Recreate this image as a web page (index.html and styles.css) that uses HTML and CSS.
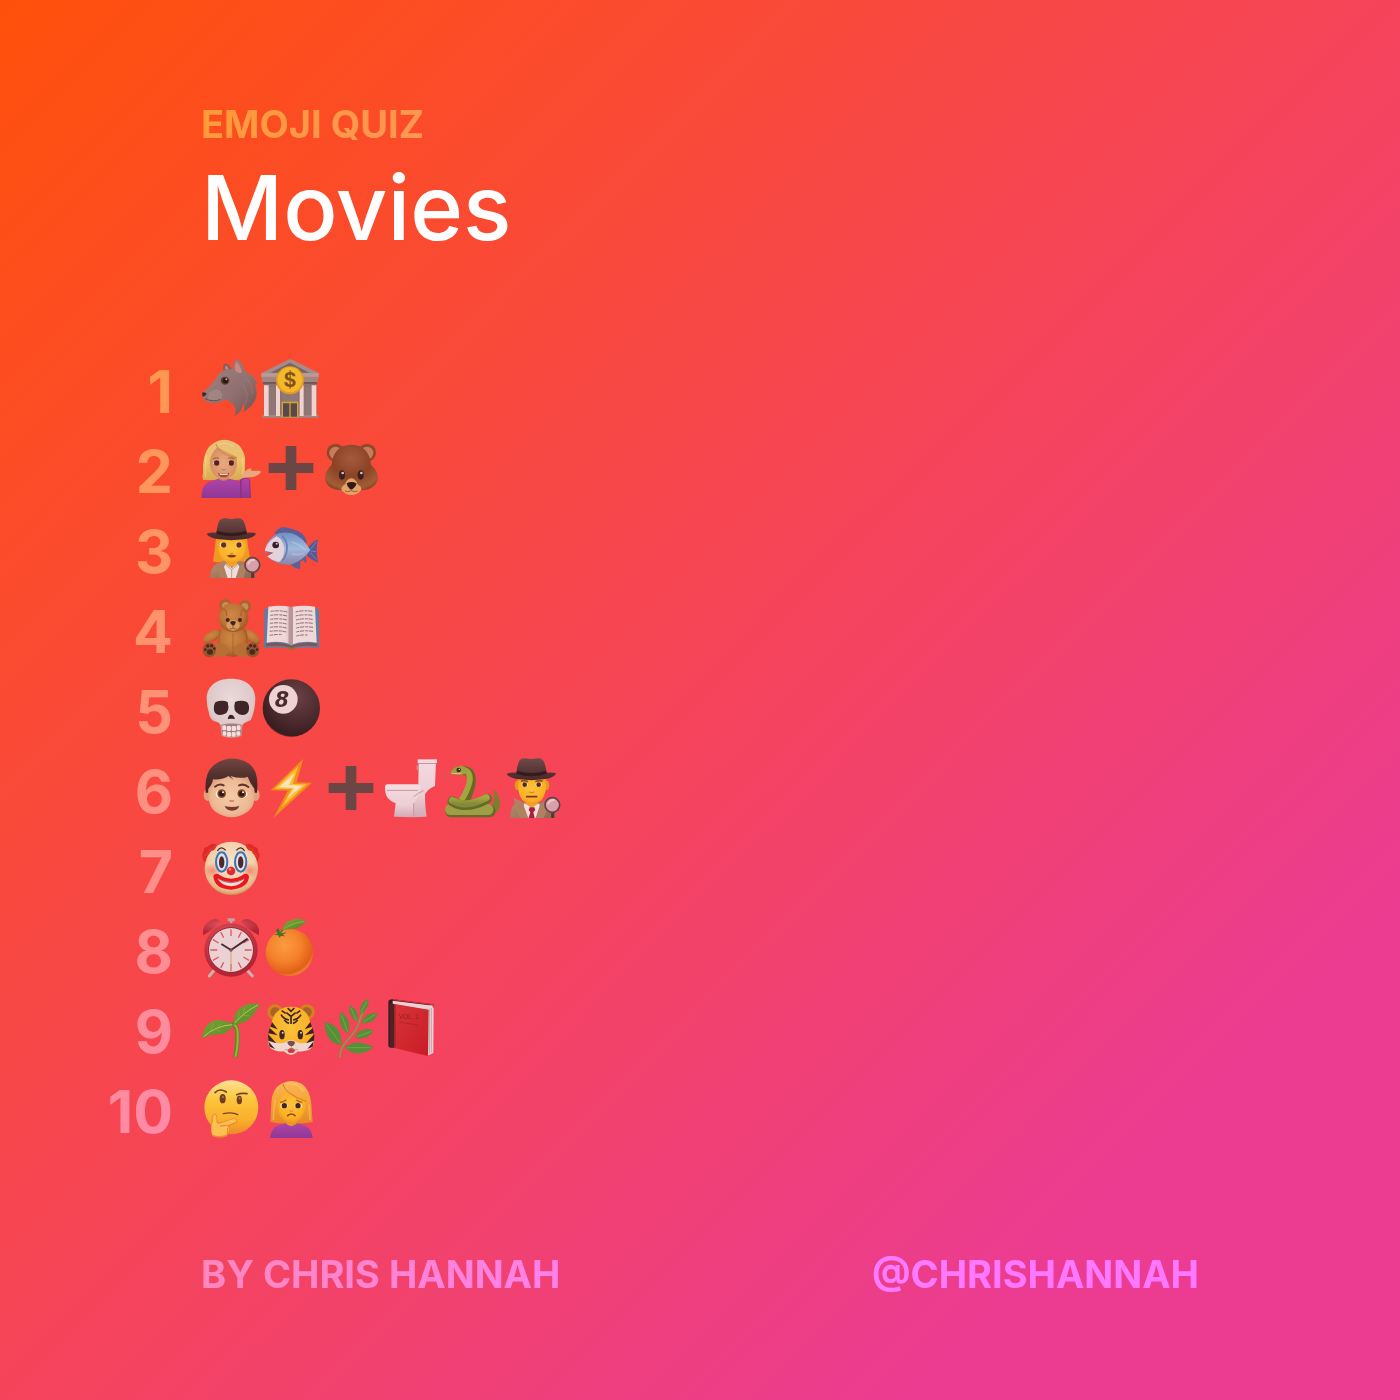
FILE: index.html
```html
<!DOCTYPE html>
<html lang="en">
<head>
<meta charset="utf-8">
<meta name="viewport" content="width=device-width, initial-scale=1">
<title>Emoji Quiz: Movies</title>
<link rel="stylesheet" href="styles.css">
</head>
<body>
<svg class="defs" aria-hidden="true">
  <defs>
    <linearGradient id="wolf" x1="0" y1="0" x2="1" y2="1"><stop offset="0" stop-color="#a08482"/><stop offset=".6" stop-color="#8f7070"/><stop offset="1" stop-color="#70504e"/></linearGradient>
    <linearGradient id="blonde" x1="0" y1="0" x2="0" y2="1"><stop offset="0" stop-color="#e9bd78"/><stop offset=".5" stop-color="#ecc56a"/><stop offset="1" stop-color="#d9a94f"/></linearGradient>
    <linearGradient id="purple" x1="0" y1="0" x2="0" y2="1"><stop offset="0" stop-color="#b044a6"/><stop offset="1" stop-color="#8f3796"/></linearGradient>
    <radialGradient id="tan" cx=".5" cy=".5" r=".6"><stop offset="0" stop-color="#e9ab82"/><stop offset="1" stop-color="#d68a5c"/></radialGradient>
    <radialGradient id="bear" cx=".5" cy=".3" r=".75"><stop offset="0" stop-color="#a65a3c"/><stop offset=".5" stop-color="#8b4325"/><stop offset=".85" stop-color="#a35d35"/><stop offset="1" stop-color="#7d3c20"/></radialGradient>
    <linearGradient id="hat" x1="0" y1="0" x2="0" y2="1"><stop offset="0" stop-color="#6e4a47"/><stop offset="1" stop-color="#48282a"/></linearGradient>
    <radialGradient id="yellow" cx=".5" cy=".4" r=".65"><stop offset="0" stop-color="#fcc23c"/><stop offset=".7" stop-color="#fbb023"/><stop offset="1" stop-color="#ee8f22"/></radialGradient>
    <linearGradient id="coat" x1="0" y1="0" x2="1" y2="1"><stop offset="0" stop-color="#b98f70"/><stop offset="1" stop-color="#8d674f"/></linearGradient>
    <linearGradient id="fish" x1="0" y1="0" x2="0" y2="1"><stop offset="0" stop-color="#6f8fc4"/><stop offset=".5" stop-color="#a0b9dc"/><stop offset="1" stop-color="#8a83a8"/></linearGradient>
    <radialGradient id="teddy" cx=".45" cy=".4" r=".65"><stop offset="0" stop-color="#cf8844"/><stop offset=".6" stop-color="#bd7435"/><stop offset="1" stop-color="#985020"/></radialGradient>
    <linearGradient id="page" x1="0" y1="0" x2="1" y2="0"><stop offset="0" stop-color="#f3dada"/><stop offset=".8" stop-color="#f0d5d5"/><stop offset="1" stop-color="#c9a5a5"/></linearGradient>
    <radialGradient id="bone" cx=".5" cy=".35" r=".65"><stop offset="0" stop-color="#eadada"/><stop offset=".7" stop-color="#dec8c8"/><stop offset="1" stop-color="#c6a4a4"/></radialGradient>
    <radialGradient id="ball" cx=".6" cy=".3" r=".75"><stop offset="0" stop-color="#6a4044"/><stop offset=".6" stop-color="#4a2a2d"/><stop offset=".92" stop-color="#391c1f"/><stop offset="1" stop-color="#664044"/></radialGradient>
    <radialGradient id="fair" cx=".5" cy=".5" r=".6"><stop offset="0" stop-color="#f4caa8"/><stop offset=".7" stop-color="#edb994"/><stop offset="1" stop-color="#dc9271"/></radialGradient>
    <linearGradient id="boyhair" x1="0" y1="0" x2="0" y2="1"><stop offset="0" stop-color="#734641"/><stop offset=".5" stop-color="#52302e"/><stop offset="1" stop-color="#402020"/></linearGradient>
    <linearGradient id="china" x1="0" y1="0" x2="0" y2="1"><stop offset="0" stop-color="#f3d9dd"/><stop offset=".6" stop-color="#ecced4"/><stop offset="1" stop-color="#d3a9b2"/></linearGradient>
    <linearGradient id="snake" x1="0" y1="0" x2="0" y2="1"><stop offset="0" stop-color="#a5a644"/><stop offset="1" stop-color="#868a34"/></linearGradient>
    <radialGradient id="clown" cx=".5" cy=".4" r=".6"><stop offset="0" stop-color="#f8e2cc"/><stop offset=".7" stop-color="#f2cfaa"/><stop offset=".9" stop-color="#e8b384"/><stop offset="1" stop-color="#cd9256"/></radialGradient>
    <radialGradient id="cheek"><stop offset="0" stop-color="#fa6a50" stop-opacity=".7"/><stop offset="1" stop-color="#fa6a50" stop-opacity="0"/></radialGradient>
    <radialGradient id="redmetal" cx=".45" cy=".35" r=".6"><stop offset="0" stop-color="#e8616a"/><stop offset="1" stop-color="#b42434"/></radialGradient>
    <radialGradient id="orange" cx=".4" cy=".35" r=".7"><stop offset="0" stop-color="#fb9c42"/><stop offset=".5" stop-color="#f5812a"/><stop offset=".85" stop-color="#e16018"/><stop offset="1" stop-color="#f49245"/></radialGradient>
    <linearGradient id="leaf" x1="0" y1="0" x2="1" y2="1"><stop offset="0" stop-color="#84a838"/><stop offset="1" stop-color="#4f8626"/></linearGradient>
    <linearGradient id="redbook" x1="0" y1="0" x2="1" y2="1"><stop offset="0" stop-color="#d93438"/><stop offset="1" stop-color="#c81c26"/></linearGradient>
    <linearGradient id="think" x1="0" y1="0" x2="0" y2="1"><stop offset="0" stop-color="#fde092"/><stop offset=".35" stop-color="#fcc53c"/><stop offset=".75" stop-color="#faae2a"/><stop offset="1" stop-color="#ee8828"/></linearGradient>
    <linearGradient id="goldhair" x1="0" y1="0" x2="0" y2="1"><stop offset="0" stop-color="#fbb85c"/><stop offset=".5" stop-color="#f4a332"/><stop offset="1" stop-color="#e58a26"/></linearGradient>

    <symbol id="plus" viewBox="0 0 180 180"><path fill="#6b4644" d="M74 24h32v51h51v30h-51v51H74v-51H23V75h51z"/></symbol>
    <symbol id="hatlens" viewBox="0 0 180 180">
      <path fill="url(#hat)" d="M17 48Q24 43 46 44 49 20 55 8 60 0 74 1 91 5 108 1 122 0 127 8 134 20 137 44 160 43 165 47 158 60 128 64 91 69 54 64 24 60 17 48z"/>
      <path fill="#351b1d" d="M48 38Q91 52 136 38L137 48Q91 62 46 48z"/>
      <path stroke="#56373c" stroke-width="9" stroke-linecap="round" d="M155 160v18"/>
      <circle cx="154" cy="141" r="22" fill="#d9a0aa" stroke="#654148" stroke-width="5"/>
      <path d="M142 137q5-12 17-11" fill="none" stroke="#ecc6cb" stroke-width="6" stroke-linecap="round"/>
    </symbol>
  </defs>
</svg>

<main class="quiz">
  <header class="masthead">
    <p class="label">EMOJI QUIZ</p>
    <h1 class="title">Movies</h1>
  </header>

  <ol class="clues">
    <li class="clue"><span class="number">1</span><span class="emojis">
      <svg class="emoji" viewBox="0 0 180 180" role="img" aria-label="Wolf">
        <path fill="#7d5f5d" d="M68 40Q64 22 72 16 86 20 92 34L86 46z"/>
        <path fill="#c98582" d="M73 35q-2-9 1-13 7 4 10 12z"/>
        <path fill="url(#wolf)" d="M4 105Q28 84 42 66 56 40 76 34L96 34Q97 12 105 2 126 12 131 38 148 52 165 54L154 57Q166 66 170 78L161 76Q168 96 167 112 160 144 127 162 134 144 127 136 124 162 100 174 108 156 99 144 92 130 72 124 54 138 36 136 10 132 9 122 2 116 4 105z"/>
        <path fill="#c98884" d="M103 38Q99 20 107 11 119 22 123 44 113 48 103 38z"/>
        <path fill="#a98c89" d="M24 104Q42 88 58 98 72 116 54 128 34 134 20 126z" opacity=".65"/>
        <ellipse cx="72" cy="68" rx="13" ry="12" fill="#5f3c32"/><circle cx="73" cy="68" r="8" fill="#28181a"/><circle cx="76" cy="64" r="3" fill="#c9aba8"/>
        <path fill="#3f282b" d="M3 104q10-3 14 4-5 8-12 8z"/><path d="M12 122q28 12 46 2" fill="none" stroke="#69484a" stroke-width="3"/>
        <path d="M134 60q22 16 20 46M126 82q22 30 6 56" fill="none" stroke="#a88b88" stroke-width="3" opacity=".4"/>
      </svg>
      <svg class="emoji" viewBox="0 0 180 180" role="img" aria-label="Bank">
        <path fill="#8b7270" d="M8 70h158v106H8z"/><path fill="#9f8884" d="M4 170h168v9H4z"/>
        <path fill="#8f7775" d="M62 88h50v88H62zM22 88h22v80H22zM130 88h22v80h-22z"/>
        <path fill="#a58c89" d="M1 45L82 5q6-3 12 0l79 40v14H1z"/><path fill="#7b6361" d="M28 44l59-30 58 30z"/>
        <path fill="#b69c98" d="M1 46h172v10H1z"/><path fill="#6e5654" d="M6 72h162v5H6z"/><path fill="#a08583" d="M3 60h168v12H3z"/>
        <path fill="#f0d2d0" d="M9 82h14v92H9zM45 82h12v92H45zM116 82h12v92h-12zM152 82h14v92h-14z"/>
        <path fill="#d6a42c" d="M62 131h50v47H62z"/><path fill="#58494f" d="M66 136h19v40H66zM89 136h19v40H89z"/>
        <circle cx="87" cy="67" r="42" fill="#e89b20"/><circle cx="87" cy="65" r="37" fill="#f2ba2b"/>
        <text x="87" y="87" class="coin-mark">$</text>
      </svg>
    </span></li>

    <li class="clue"><span class="number">2</span><span class="emojis">
      <svg class="emoji" viewBox="0 0 180 180" role="img" aria-label="Woman tipping hand">
        <path fill="url(#blonde)" d="M40 14Q65-3 98 12 126 24 132 60L132 118Q110 132 67 126L8 126Q2 122 6 104 4 32 40 14z"/>
        <path fill="#cf8456" d="M52 108h32v26H52z"/>
        <path fill="url(#purple)" d="M2 180Q0 138 30 130L52 122Q67 134 84 122L118 130V180z"/>
        <path fill="url(#tan)" d="M26 66Q34 40 50 28 82 46 106 56 114 100 88 117 67 130 46 117 24 100 26 66z"/>
        <path d="M45 18Q50 48 108 60" fill="none" stroke="#c78d40" stroke-width="3"/>
        <path d="M50 20q26-12 48 6M16 50q-4 36-2 68M124 60q4 26 1 54" fill="none" stroke="#f4d694" stroke-width="5" opacity=".5"/>
        <path fill="#fff0e6" d="M36 76q10-12 20 0-10 9-20 0zM80 76q10-12 20 0-10 9-20 0z"/><circle cx="47" cy="75" r="8" fill="#502420"/><circle cx="91" cy="75" r="8" fill="#502420"/>
        <path d="M36 63q8-6 18-2M82 61q10-4 18 2" fill="none" stroke="#a86835" stroke-width="4"/>
        <path fill="#a04b3c" d="M51 104q17 5 34 0-2 14-17 14t-17-14z"/><path fill="#efd1c7" d="M55 106q13 3 26 0l-2 5H57z"/>
        <path d="M62 94q6 4 12 0" fill="none" stroke="#c07650" stroke-width="3"/>
        <path fill="#912e86" d="M117 126q14-14 30-2l3 56h-33z"/><path fill="url(#purple)" d="M122 126q11-8 22-2l3 56h-25z"/>
        <path fill="#eaa77b" d="M123 120L125 108Q140 90 152 92L149 98 171 98Q183 98 178 105 168 117 145 118z"/>
      </svg>
      <svg class="emoji" role="img" aria-label="Plus"><use href="#plus"/></svg>
      <svg class="emoji" viewBox="0 0 180 180" role="img" aria-label="Bear">
        <circle cx="44" cy="44" r="27" fill="#8f4828"/><circle cx="44" cy="45" r="19" fill="#c97c5c"/><circle cx="138" cy="44" r="27" fill="#8f4828"/><circle cx="138" cy="45" r="19" fill="#c97c5c"/>
        <path fill="url(#bear)" d="M91 20C130 20 147 46 150 80 163 92 172 106 171 120 168 148 138 159 112 156 99 162 84 162 71 156 44 160 13 148 12 120 12 106 20 92 32 80 35 46 52 20 91 20z"/>
        <path fill="#e2a366" d="M91 121Q104 122 110 139 124 147 120 157 110 171 91 171 73 171 62 157 58 147 72 139 78 122 91 121z"/>
        <path fill="#33191c" d="M77 136q14-8 29 0 2 6-12 18-4 2-8-2-9-9-9-16z"/><path d="M91 153v5q-12 6-19 1M91 158q12 6 19 1" fill="none" stroke="#a0643e" stroke-width="3"/>
        <ellipse cx="63" cy="111" rx="9" ry="14" fill="#39201f"/><ellipse cx="119" cy="111" rx="9" ry="14" fill="#39201f"/><circle cx="65" cy="105" r="4" fill="#d8bfc3"/><circle cx="121" cy="105" r="4" fill="#d8bfc3"/>
      </svg>
    </span></li>

    <li class="clue"><span class="number">3</span><span class="emojis">
      <svg class="emoji" viewBox="0 0 180 180" role="img" aria-label="Woman detective">
        <path fill="#ed9a24" d="M45 60Q40 108 36 130 50 136 66 130L120 130Q134 136 149 128 142 98 138 60z"/>
        <path fill="url(#coat)" d="M27 180Q28 146 48 138L70 128H116L138 140Q160 150 163 180z"/>
        <path fill="#eea02d" d="M76 122h32v24H76z"/>
        <path fill="url(#yellow)" d="M51 62H135Q138 104 122 122 92 150 63 122 48 104 51 62z"/>
        <path fill="#f1dddb" d="M74 138L92 150 110 138 120 152 110 180H76L65 152z"/><path d="M74 141l18 14 18-14M92 153v27" fill="none" stroke="#bd9ea0" stroke-width="3"/>
        <path fill="#ad8162" d="M46 136L67 140 80 180H58zM117 140L139 136 128 180H104z"/>
        <ellipse cx="67" cy="81" rx="10" ry="9" fill="#f9e4d2"/><ellipse cx="114" cy="81" rx="10" ry="9" fill="#f9e4d2"/><circle cx="68" cy="81" r="8" fill="#66301c"/><circle cx="114" cy="81" r="8" fill="#66301c"/>
        <path d="M87 105q5 4 10 0" fill="none" stroke="#dd8b20" stroke-width="4"/><path fill="#80342b" d="M77 113q14-5 30 0-14 11-30 0z"/>
        <use href="#hatlens"/>
      </svg>
      <svg class="emoji" viewBox="0 0 180 180" role="img" aria-label="Fish">
        <path fill="#5b5f96" d="M40 44Q54 30 64 27 96 30 120 44 134 54 138 76L60 62zM80 132Q96 150 117 153L118 130 127 126Q131 136 137 134L134 110z"/>
        <path fill="#535b95" d="M138 93Q152 72 171 64 163 94 171 134 150 126 134 108z"/><path d="M148 94l18-22M150 99l16 2M148 104l18 20" stroke="#7781b4" stroke-width="3"/>
        <path fill="url(#fish)" d="M12 95Q20 60 54 46 104 34 136 78L148 97Q124 130 90 140 46 142 17 113L28 106 13 103z"/>
        <path fill="#e3d1dc" d="M12 94Q24 66 47 55 66 62 70 92 69 124 54 132 32 127 17 113L29 107 13 102z"/>
        <path d="M63 53q20 20 14 48-4 20-14 27" fill="none" stroke="#6580b1" stroke-width="5"/>
        <path d="M13 101l19 4-15 8" fill="none" stroke="#ac5568" stroke-width="4"/>
        <circle cx="44" cy="81" r="10" fill="#331e29"/><circle cx="47" cy="77" r="3" fill="#d4c2ca"/><path d="M92 72q28 7 42 26M92 108q18 4 38-2" stroke="#c0d0e7" stroke-width="4" fill="none" opacity=".5"/>
      </svg>
    </span></li>

    <li class="clue"><span class="number">4</span><span class="emojis">
      <svg class="emoji" viewBox="0 0 180 180" role="img" aria-label="Teddy bear">
        <circle cx="73" cy="22" r="18" fill="#a96230"/><circle cx="74" cy="23" r="11" fill="#c88c54"/><circle cx="132" cy="25" r="18" fill="#a96230"/><circle cx="131" cy="26" r="11" fill="#c88c54"/>
        <ellipse cx="34" cy="114" rx="32" ry="15" transform="rotate(-30 34 114)" fill="url(#teddy)"/><ellipse cx="151" cy="116" rx="32" ry="15" transform="rotate(36 151 116)" fill="url(#teddy)"/>
        <path fill="url(#teddy)" d="M58 94Q96 78 134 94 150 140 134 166 97 186 58 166 42 138 58 94z"/>
        <path d="M96 105v70M58 96q-8 40 2 68M134 96q8 40 0 68" stroke="#9c592a" stroke-width="2" fill="none"/>
        <ellipse cx="97" cy="59" rx="45" ry="43" fill="url(#teddy)"/><path d="M58 40Q74 20 78 54M119 54Q122 20 136 44" fill="none" stroke="#8e4f26" stroke-width="2"/>
        <ellipse cx="96" cy="82" rx="20" ry="16" fill="#d89c5d"/><path fill="#41251f" d="M87 72q9-6 18 0-3 10-9 11-7-2-9-11z"/><path d="M96 82v8q-6 5-11 2M96 90q6 5 11 2" fill="none" stroke="#724126" stroke-width="2"/>
        <circle cx="80" cy="66" r="6" fill="#40221f"/><circle cx="117" cy="66" r="6" fill="#40221f"/>
        <ellipse cx="53" cy="156" rx="31" ry="21" fill="#b86f35"/><ellipse cx="128" cy="156" rx="31" ry="21" fill="#b86f35"/><ellipse cx="25" cy="156" rx="20" ry="22" fill="#94552e"/><ellipse cx="155" cy="156" rx="20" ry="22" fill="#94552e"/>
        <g fill="#492922"><ellipse cx="27" cy="162" rx="9" ry="8"/><circle cx="13" cy="155" r="4"/><circle cx="20" cy="144" r="5"/><circle cx="32" cy="143" r="5"/><circle cx="40" cy="152" r="4"/><ellipse cx="154" cy="162" rx="9" ry="8"/><circle cx="168" cy="155" r="4"/><circle cx="161" cy="144" r="5"/><circle cx="149" cy="143" r="5"/><circle cx="141" cy="152" r="4"/></g>
      </svg>
      <svg class="emoji" viewBox="0 0 180 180" role="img" aria-label="Open book">
        <path fill="#5980a6" d="M10 34L24 30H160L174 34V150Q140 146 108 149 92 160 76 149 42 146 9 150z"/><path fill="#7e5559" d="M15 136Q60 130 91 143 124 130 169 136V145Q124 139 91 150 60 139 15 145z"/>
        <path fill="url(#page)" d="M22 26Q58 20 91 27V140Q60 126 17 134z"/><path fill="#f1d8d8" d="M162 26Q126 20 91 27V140Q124 126 167 134z"/><path fill="#b69698" d="M83 27h8v113l-8-3zM91 27h5v111l-5 2z"/>
        <path fill="none" stroke="#8d6d72" stroke-width="3" stroke-dasharray="9 2 13 3" d="M29 40q28-4 50 2M28 52q28-4 50 2M28 64q28-4 50 2M27 76q28-4 50 2M27 88q28-4 50 2M26 100q28-4 50 2M26 112q28-4 36-2M104 42q22-6 50-2M104 54q22-6 50-2M105 66q22-6 50-2M105 78q22-6 50-2M106 90q22-6 50-2M106 102q22-6 50-2M106 114q14-4 34-3"/>
        <path d="M78 144q13 12 26 0v7q-13 10-26 0z" fill="#94722d"/>
      </svg>
    </span></li>

    <li class="clue"><span class="number">5</span><span class="emojis">
      <svg class="emoji" viewBox="0 0 180 180" role="img" aria-label="Skull">
        <path fill="url(#bone)" d="M90 2C138 2 163 28 163 62 162 92 156 112 150 125 142 132 129 131 124 142L122 174Q91 185 62 174L59 142Q54 132 40 130 26 124 24 106 17 86 17 62C17 28 42 2 90 2z"/>
        <path fill="#3f2528" d="M44 72Q64 65 80 72 88 104 68 109 46 116 39 98 37 80 44 72zM102 72Q120 65 138 72 147 82 143 99 136 115 114 109 94 100 102 72z"/>
        <path fill="#3a2022" d="M91 111Q97 109 102 123L93 122 90 122 80 123Q84 108 91 111z"/>
        <path fill="#a27f82" d="M61 140Q91 133 122 140V172Q91 180 63 172z"/>
        <g fill="#f2dedc"><rect x="64" y="142" width="11" height="15" rx="4"/><rect x="77" y="144" width="13" height="15" rx="4"/><rect x="92" y="144" width="13" height="15" rx="4"/><rect x="107" y="142" width="12" height="15" rx="4"/><rect x="65" y="160" width="11" height="13" rx="4"/><rect x="78" y="162" width="12" height="14" rx="4"/><rect x="92" y="162" width="12" height="14" rx="4"/><rect x="106" y="160" width="12" height="13" rx="4"/></g>
      </svg>
      <svg class="emoji" viewBox="0 0 180 180" role="img" aria-label="Pool 8 ball">
        <circle cx="91" cy="90" r="86" fill="url(#ball)"/><circle cx="67" cy="64" r="43" fill="#efd3d4"/><text x="63" y="87" class="ball-mark">8</text>
      </svg>
    </span></li>

    <li class="clue"><span class="number">6</span><span class="emojis">
      <svg class="emoji" viewBox="0 0 180 180" role="img" aria-label="Boy">
        <ellipse cx="20" cy="111" rx="12" ry="18" fill="#e0a27c"/><ellipse cx="164" cy="111" rx="12" ry="18" fill="#e0a27c"/>
        <path fill="url(#boyhair)" d="M14 100Q10 46 36 24 66-2 104 2 148 8 162 40 172 64 168 104H14z"/>
        <path fill="url(#fair)" d="M22 92Q34 80 36 64 66 66 82 54L98 66 88 54Q120 64 140 56 148 78 160 92 166 140 142 160 92 196 41 160 18 140 22 92z"/>
        <ellipse cx="60" cy="108" rx="16" ry="13" fill="#fff1e4"/><ellipse cx="123" cy="108" rx="16" ry="13" fill="#fff1e4"/><circle cx="62" cy="107" r="13" fill="#86451c"/><circle cx="122" cy="107" r="13" fill="#86451c"/><circle cx="62" cy="107" r="8" fill="#2d171b"/><circle cx="122" cy="107" r="8" fill="#2d171b"/><circle cx="66" cy="103" r="3" fill="#fff"/><circle cx="126" cy="103" r="3" fill="#fff"/>
        <path d="M42 86q12-11 26-4M114 82q16-6 28 5" fill="none" stroke="#603729" stroke-width="6" stroke-linecap="round"/><path d="M85 127q7 5 14 0" stroke="#cf8260" stroke-width="5" fill="none"/>
        <path fill="#79372e" d="M71 144q22 6 44 0-5 14-22 14t-22-14z"/>
      </svg>
      <svg class="emoji" viewBox="0 0 180 180" role="img" aria-label="Lightning">
        <path fill="#f28c1c" d="M127 2L29 97 80 98 38 179 153 74 107 73z"/><path fill="#ffbd31" d="M112 24L41 92 91 93 61 149 138 79 95 78z"/><path fill="#f9e4bd" d="M100 46L53 88 99 90 79 121 125 83 84 81z"/>
      </svg>
      <svg class="emoji" role="img" aria-label="Plus"><use href="#plus"/></svg>
      <svg class="emoji" viewBox="0 0 180 180" role="img" aria-label="Toilet">
        <path fill="url(#china)" d="M113 10H165L162 84Q142 92 132 108 132 148 137 176L96 178V90L112 82z"/><path fill="#f2d9de" d="M110 4h58v11h-58z"/><path fill="#c695a2" d="M112 15h54v3h-54zM107 22h6v13h-6z"/>
        <path fill="url(#china)" d="M13 87Q8 122 44 136L39 176 96 178 98 134Q116 120 116 87z"/><rect x="12" y="79" width="106" height="17" rx="8" fill="#f2dce0"/><path d="M17 97h94M98 116q14-12 30-18M98 178v-42" fill="none" stroke="#c698a4" stroke-width="3"/>
      </svg>
      <svg class="emoji" viewBox="0 0 180 180" role="img" aria-label="Snake">
        <path d="M36 45L19 53 5 48M19 53l-9 9" fill="none" stroke="#d65663" stroke-width="4"/>
        <path fill="#7d7f2d" d="M158 93Q184 126 175 151 160 176 128 174L128 150Q166 158 158 93z"/>
        <path d="M61 38Q95 34 91 75 86 104 67 138" fill="none" stroke="#656b23" stroke-width="26"/><path d="M61 35Q91 36 86 71 79 101 58 132" fill="none" stroke="#a2a63f" stroke-width="17"/>
        <rect x="12" y="140" width="152" height="38" rx="19" fill="#656a28"/><rect x="12" y="138" width="145" height="33" rx="16" fill="#a09e44"/>
        <path d="M34 130Q76 157 138 122" fill="none" stroke="#646a29" stroke-width="29" stroke-linecap="round"/><path d="M34 128Q78 151 136 119" fill="none" stroke="url(#snake)" stroke-width="21" stroke-linecap="round"/>
        <path fill="#9ca13c" d="M29 43Q35 27 59 23 77 24 80 43 68 54 47 50 34 51 29 43z"/><path d="M31 46q19 2 31-1" stroke="#d1c276" stroke-width="3" fill="none"/><circle cx="53" cy="36" r="7" fill="#492725"/><circle cx="55" cy="34" r="2" fill="#efd"/>
      </svg>
      <svg class="emoji" viewBox="0 0 180 180" role="img" aria-label="Man detective">
        <ellipse cx="49" cy="82" rx="8" ry="14" fill="#e89520"/><ellipse cx="137" cy="82" rx="8" ry="14" fill="#e89520"/>
        <path fill="url(#coat)" d="M27 180Q28 148 42 138L38 120 68 134H116L146 122 142 140Q162 150 163 180z"/><path fill="#eea02d" d="M74 124h36v24H74z"/>
        <path fill="url(#yellow)" d="M50 62H136Q138 106 122 126 92 150 64 126 48 106 50 62z"/>
        <path fill="#f1dddb" d="M70 136L92 149 114 136 120 152 110 180H76L65 152z"/><path fill="#a91f38" d="M86 148h14l3 8-6 7 4 17H83l5-17-5-7z"/>
        <path fill="#ad8162" d="M40 122L67 140 82 180H58L42 150zM117 140L144 124 142 146 128 180H104z"/>
        <ellipse cx="71" cy="80" rx="9" ry="7" fill="#f9e4d2"/><ellipse cx="113" cy="80" rx="9" ry="7" fill="#f9e4d2"/><circle cx="71" cy="80" r="7" fill="#53291c"/><circle cx="113" cy="80" r="7" fill="#53291c"/><path d="M60 70q10-5 21 1M103 71q12-6 22-1" fill="none" stroke="#925019" stroke-width="5"/><path d="M84 101q8 6 16 0" fill="none" stroke="#d98718" stroke-width="4"/><path d="M77 116h30" stroke="#80342b" stroke-width="5" stroke-linecap="round"/>
        <use href="#hatlens"/>
      </svg>
    </span></li>

    <li class="clue"><span class="number">7</span><span class="emojis">
      <svg class="emoji" viewBox="0 0 180 180" role="img" aria-label="Clown">
        <path fill="#df2926" d="M6 64Q0 48 8 42 6 28 20 26 30 14 44 18L34 60 12 74zM172 64Q180 48 171 42 173 28 160 26 150 14 136 18L146 60 168 74z"/>
        <circle cx="91" cy="91" r="80" fill="url(#clown)"/><path d="M12 52q12-4 14-17 13 2 18-13M169 52q-12-4-14-17-13 2-18-13" fill="none" stroke="#e0382f" stroke-width="7" stroke-linecap="round"/>
        <ellipse cx="34" cy="98" rx="27" ry="23" fill="url(#cheek)"/><ellipse cx="147" cy="98" rx="27" ry="23" fill="url(#cheek)"/>
        <ellipse cx="62" cy="72" rx="17" ry="29" fill="#eadce2" stroke="#3776b5" stroke-width="6"/><ellipse cx="119" cy="72" rx="17" ry="29" fill="#eadce2" stroke="#3776b5" stroke-width="6"/><ellipse cx="62" cy="73" rx="8" ry="18" fill="#4b292d"/><ellipse cx="119" cy="73" rx="8" ry="18" fill="#4b292d"/>
        <path d="M49 39q11-18 25-2M106 37q14-16 25 2" fill="none" stroke="#482a2b" stroke-width="4"/><circle cx="90" cy="99" r="13" fill="#e32830"/><circle cx="87" cy="94" r="4" fill="#f6807b"/>
        <path fill="#ed161c" d="M37 115Q39 104 51 108 90 136 130 108 143 105 144 118 140 151 91 155 40 153 37 115z"/><path fill="#f2dcd5" d="M49 120Q91 144 132 120 123 142 91 145 58 142 49 120z"/><path d="M50 121q40 26 82 0" fill="none" stroke="#7c2f2d" stroke-width="2"/>
      </svg>
    </span></li>

    <li class="clue"><span class="number">8</span><span class="emojis">
      <svg class="emoji" viewBox="0 0 180 180" role="img" aria-label="Alarm clock">
        <path d="M42 154L25 174M136 154l18 20" stroke="#cab1b4" stroke-width="9" stroke-linecap="round"/><path fill="#c4a2a5" d="M80 1h21v9h-7v12h-7V10h-7z"/>
        <path fill="url(#redmetal)" d="M7 52Q1 22 28 8 46-3 62 12L40 31zM173 52Q179 22 152 8 134-3 118 12L140 31z"/>
        <circle cx="90" cy="96" r="80" fill="url(#redmetal)"/><circle cx="90" cy="96" r="69" fill="#9c2b38"/><circle cx="90" cy="96" r="66" fill="#ebd1d4"/>
        <path stroke="#dd5960" stroke-width="4" d="M90 34v20M90 138v20M28 96h21M131 96h21M59 42l9 17M112 133l9 17M36 65l17 10M127 117l17 10M36 127l17-10M127 75l17-10M59 150l9-17M112 59l9-17"/>
        <path d="M90 96L61 78M90 96l50-34" stroke="#4a2c33" stroke-width="6"/><path d="M90 90v72" stroke="#d1a168" stroke-width="3"/><circle cx="90" cy="96" r="5" fill="#735055"/>
      </svg>
      <svg class="emoji" viewBox="0 0 180 180" role="img" aria-label="Tangerine">
        <circle cx="85" cy="103" r="71" fill="url(#orange)"/><path fill="#457328" d="M44 37L52 31 59 46 77 43 65 50 73 55 60 54 55 59 52 52 39 50 50 46z"/><path d="M56 49q8-18 22-22" stroke="#50752a" stroke-width="5" fill="none"/>
        <path fill="url(#leaf)" d="M62 35Q75 1 113 2 130 4 135 10 118 37 62 35z"/><path d="M68 32Q102 12 130 11" stroke="#a8ba60" stroke-width="2" fill="none"/>
      </svg>
    </span></li>

    <li class="clue"><span class="number">9</span><span class="emojis">
      <svg class="emoji" viewBox="0 0 180 180" role="img" aria-label="Seedling">
        <path d="M92 79Q110 76 109 118 109 152 103 178" fill="none" stroke="#578b25" stroke-width="13"/><path d="M98 79Q112 84 110 118 110 152 103 176" fill="none" stroke="#90b83a" stroke-width="6"/>
        <path fill="url(#leaf)" d="M2 122Q9 74 45 66 73 66 97 79 83 112 43 110 20 110 2 122zM99 80Q93 39 133 21 153 14 177 18 167 34 157 50 142 74 99 80z"/><path d="M8 116Q42 84 93 80M101 75Q128 44 170 21" fill="none" stroke="#b4c85c" stroke-width="3"/><path d="M30 96L38 76M50 87l12-12M44 92l13 10M112 64l2-22M126 51l5-21M127 52l20 2" stroke="#90ad42" stroke-width="2"/>
      </svg>
      <svg class="emoji" viewBox="0 0 180 180" role="img" aria-label="Tiger">
        <circle cx="42" cy="42" r="23" fill="#d6821c"/><circle cx="43" cy="43" r="15" fill="#a8622b"/><circle cx="138" cy="42" r="23" fill="#d6821c"/><circle cx="137" cy="43" r="15" fill="#a8622b"/>
        <path fill="url(#yellow)" d="M90 26C126 26 145 48 148 74 156 96 161 120 158 138 148 160 120 160 111 160 98 174 82 174 69 160 53 162 32 158 23 141 18 120 25 94 32 74 36 48 54 26 90 26z"/>
        <path fill="#efd6d1" d="M24 122Q48 143 76 132 91 118 105 132 132 143 157 122 162 146 143 156 127 161 111 160 90 180 69 160 40 161 28 149 20 138 24 122z"/>
        <path fill="#3b2524" d="M33 72L50 94 28 86zM26 90L50 112 22 106zM21 108L46 136 22 128zM22 130L42 153 26 146zM148 72L131 94 153 86zM155 90L131 112 159 106zM160 108L135 136 159 128zM158 130L139 153 155 146z"/>
        <path d="M90 52v26M80 30l10 10 10-10M76 44l14 11 14-11M62 38l12 8M118 38l-12 8M60 50q8 14 24 16M120 50q-8 14-24 16M70 66q6 8 14 10M110 66q-6 8-14 10" fill="none" stroke="#3b2524" stroke-width="5"/>
        <ellipse cx="63" cy="110" rx="8" ry="14" fill="#402326"/><ellipse cx="118" cy="110" rx="8" ry="14" fill="#402326"/><circle cx="65" cy="104" r="3" fill="#e5cace"/><circle cx="120" cy="104" r="3" fill="#e5cace"/>
        <path fill="#785049" d="M79 132q11-7 23 0-1 12-11 13-10-2-12-13z"/><path fill="#dc3240" d="M79 157Q91 143 103 157 98 167 91 164 81 167 79 157z"/><path d="M91 144v8q-11 6-20 3M91 152q11 6 20 3" fill="none" stroke="#a2837b" stroke-width="2"/>
      </svg>
      <svg class="emoji" viewBox="0 0 180 180" role="img" aria-label="Herb">
        <path d="M57 179Q56 151 80 126 109 96 117 64 125 40 139 16" fill="none" stroke="#79a345" stroke-width="5"/>
        <path fill="#568f38" d="M61 141Q12 136 11 72 65 82 61 141zM81 107Q46 84 59 41 95 65 81 107zM108 72Q79 54 86 22 117 38 108 72zM118 49Q112 14 142 2 147 31 118 49zM122 75Q131 42 170 45 162 79 122 75zM102 119Q114 85 157 97 144 129 102 119zM72 149Q105 119 158 148 110 185 72 149z"/>
        <path d="M17 80l40 54M62 52l18 50M90 30l16 38M119 44l19-35M127 72l36-23M108 116l43-16M78 149h70" fill="none" stroke="#88ad50" stroke-width="2"/>
      </svg>
      <svg class="emoji" viewBox="0 0 180 180" role="img" aria-label="Red book">
        <path fill="#3a1d22" d="M22 11Q24 3 36 4L158 20V30L40 18 38 149Q25 151 22 145z"/><path fill="#ead1d3" d="M35 8L145 22 158 22 157 165 139 173 138 36 35 18z"/><path d="M145 33v134M151 30v134" stroke="#ac8f94" stroke-width="2"/>
        <path fill="url(#redbook)" d="M37 17L143 35 141 174 37 149z"/><path fill="#502126" d="M26 14L40 19V149L27 147z"/><path d="M42 20v128" stroke="#9e2027" stroke-width="3"/><path d="M36 5l121 15v8" fill="none" stroke="#d52d35" stroke-width="4"/>
        <text x="54" y="63" class="volume-mark">VOL. 1</text><path d="M55 72l58 10" stroke="#9c2729" stroke-width="3" stroke-dasharray="5 2"/>
      </svg>
    </span></li>

    <li class="clue"><span class="number">10</span><span class="emojis">
      <svg class="emoji" viewBox="0 0 180 180" role="img" aria-label="Thinking face">
        <circle cx="91" cy="88" r="81" fill="url(#think)"/><ellipse cx="65" cy="62" rx="9" ry="14" fill="#703e20"/><ellipse cx="115" cy="66" rx="8" ry="13" fill="#703e20"/><circle cx="66" cy="57" r="3" fill="#b6794c"/><circle cx="116" cy="61" r="3" fill="#b6794c"/>
        <path d="M42 44q14-15 34-2M107 50q14-6 31-3" fill="none" stroke="#774421" stroke-width="5" stroke-linecap="round"/><path d="M67 107q28-6 43 3" fill="none" stroke="#774421" stroke-width="4" stroke-linecap="round"/>
        <path fill="#ed8f2a" d="M34 174Q26 151 32 127 30 110 41 106 50 109 49 127L52 134 98 121Q113 122 108 134L86 145Q91 163 77 175 57 184 34 174z"/><path fill="#fcc052" d="M34 170Q28 149 36 130 33 114 41 109 48 113 46 132L53 138 97 123Q108 122 105 131L76 143 84 150Q85 167 72 171 55 178 34 170z"/><path d="M57 145l20-4M80 150v20" stroke="#df8427" stroke-width="3"/>
      </svg>
      <svg class="emoji" viewBox="0 0 180 180" role="img" aria-label="Woman frowning">
        <path fill="url(#goldhair)" d="M61 17Q91 0 123 18 147 35 151 78L155 132Q122 138 91 136 58 138 28 132L31 76Q32 32 61 17z"/><path fill="#e99824" d="M75 122h32v26H75z"/>
        <path fill="url(#purple)" d="M27 180Q30 148 54 142L74 136Q91 153 108 136L133 143Q152 151 155 180z"/>
        <path fill="url(#yellow)" d="M50 76Q62 62 68 43 100 61 133 70 136 109 114 126 91 141 68 127 48 110 50 76z"/><path d="M66 18Q67 44 136 71" fill="none" stroke="#d77c25" stroke-width="3"/><path d="M74 17q36-4 53 22M43 65q-6 30-6 61M144 80l3 46" fill="none" stroke="#fdca70" stroke-width="5" opacity=".5"/>
        <ellipse cx="69" cy="83" rx="11" ry="8" fill="#fbe4c1"/><ellipse cx="112" cy="83" rx="11" ry="8" fill="#fbe4c1"/><circle cx="70" cy="83" r="8" fill="#472420"/><circle cx="111" cy="83" r="8" fill="#472420"/>
        <path d="M57 73q10-1 19-8M106 65q8 7 18 8" fill="none" stroke="#aa661e" stroke-width="4"/><path d="M80 113q11-10 22 0" fill="none" stroke="#984522" stroke-width="5" stroke-linecap="round"/><path d="M85 98q6 4 12 0" fill="none" stroke="#d88424" stroke-width="3"/>
      </svg>
    </span></li>
  </ol>

  <footer class="credits">
    <span class="label">BY CHRIS HANNAH</span>
    <span class="label">@CHRISHANNAH</span>
  </footer>
</main>
</body>
</html>
```
FILE: styles.css
```css
* {
  box-sizing: border-box;
}

body {
  margin: 0;
  font-family: Inter, "Liberation Sans", sans-serif;
}

.defs {
  display: block;
  width: 0;
  height: 0;
}

.quiz {
  display: flex;
  flex-direction: column;
  min-height: 100vh;
  padding: 100px 101px 102px;
  background: linear-gradient(135deg, #ff500a 0%, #f5445a 50%, #eb3c91 82%);
  color: #fff;
}

.masthead {
  padding-left: 100px;
}

.label,
.number {
  mix-blend-mode: overlay;
}

.label {
  margin: 0;
  font-size: 38px;
  font-weight: 700;
  line-height: 48px;
}

.title {
  margin: 0;
  font-size: 90px;
  font-weight: 500;
  line-height: 120px;
}

.clues {
  display: grid;
  gap: 12px;
  margin: 90px 0 0;
  padding: 0;
  list-style: none;
}

.clue {
  display: grid;
  grid-template-columns: 72px 1fr;
  column-gap: 28px;
}

.number {
  font-size: 59px;
  font-weight: 700;
  line-height: 68px;
  text-align: right;
}

.emojis {
  display: flex;
}

.emoji {
  display: block;
  flex: none;
  width: 60px;
  height: 60px;
}

.credits {
  display: flex;
  justify-content: space-between;
  margin-top: auto;
  padding: 0 100px;
}

.coin-mark {
  fill: #85511f;
  font: 700 60px Inter, sans-serif;
  text-anchor: middle;
}

.ball-mark {
  fill: #4a2a2d;
  font: italic 700 62px "DejaVu Sans", sans-serif;
  text-anchor: middle;
}

.volume-mark {
  fill: #8d2228;
  font: 400 19px "Liberation Sans", sans-serif;
}
```
